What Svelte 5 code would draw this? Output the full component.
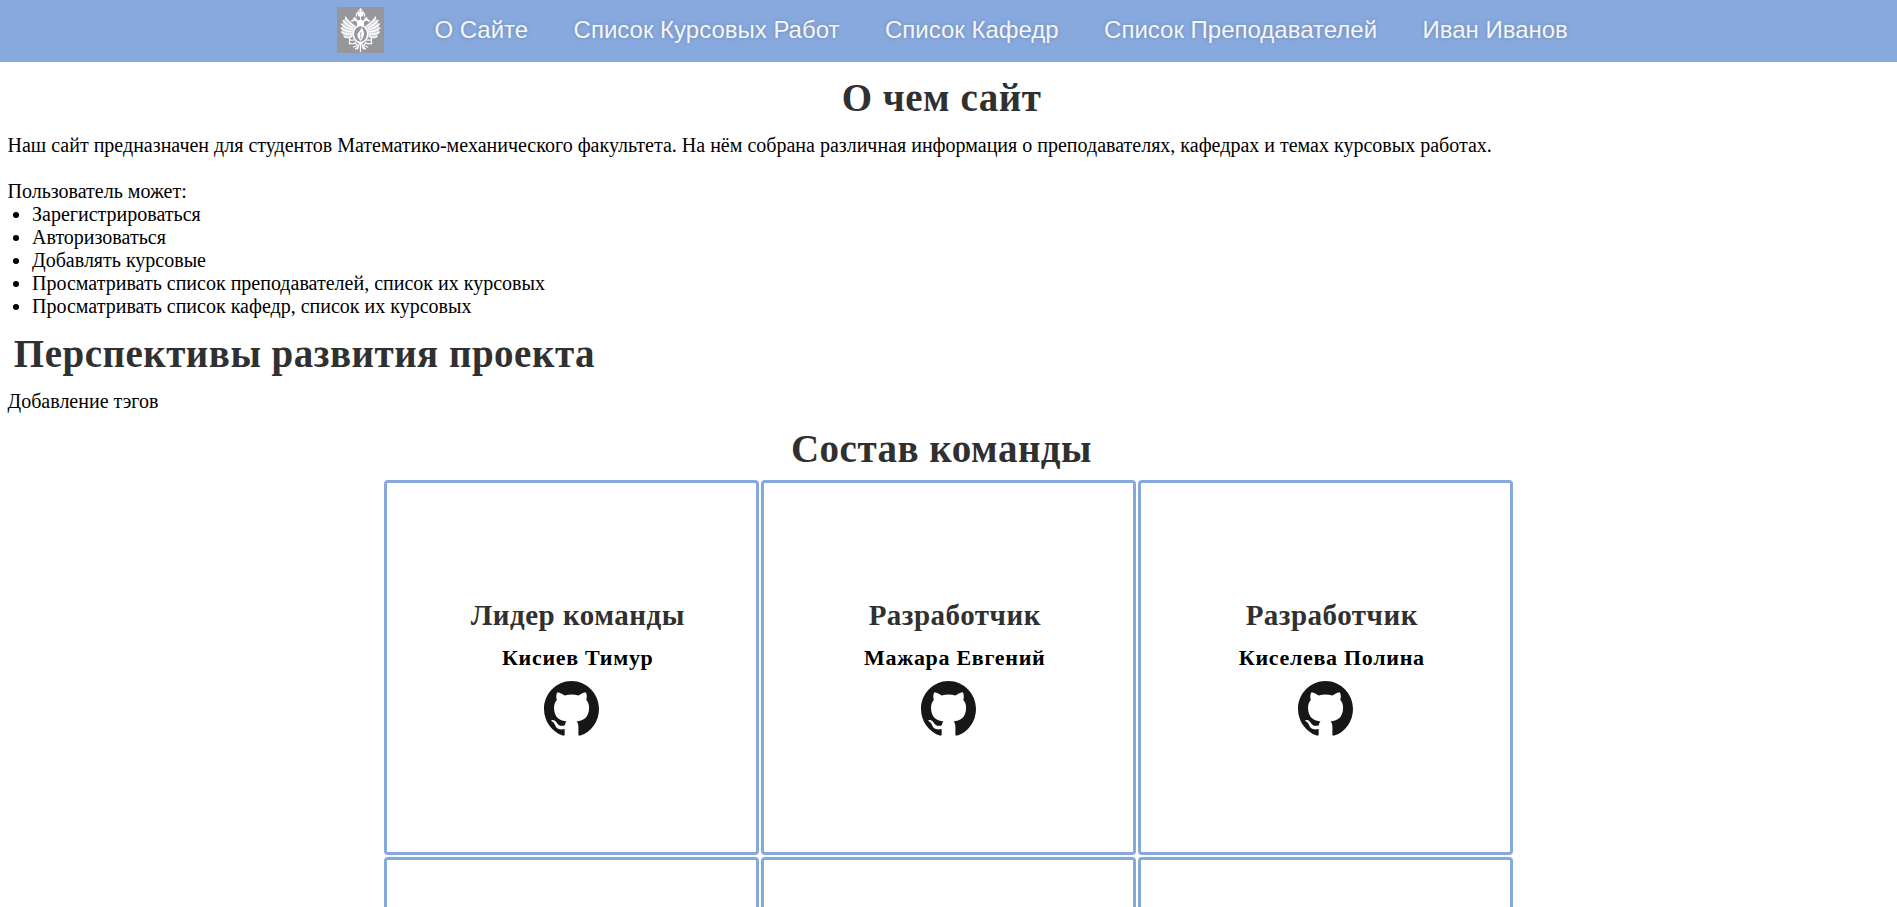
<script>
  const links = [
    'О Сайте',
    'Список Курсовых Работ',
    'Список Кафедр',
    'Список Преподавателей',
    'Иван Иванов'
  ];

  const abilities = [
    'Зарегистрироваться',
    'Авторизоваться',
    'Добавлять курсовые',
    'Просматривать список преподавателей, список их курсовых',
    'Просматривать список кафедр, список их курсовых'
  ];

  const team = [
    { role: 'Лидер команды', name: 'Кисиев Тимур' },
    { role: 'Разработчик', name: 'Мажара Евгений' },
    { role: 'Разработчик', name: 'Киселева Полина' },
    null,
    null,
    null
  ];
</script>

{#snippet wing()}
  <path fill="#fff" fill-opacity=".6" stroke="none" d="M8.500 10 L16 17 L19.500 19 L16.500 23 L15 29 L8 31 L5 26 L5 18 Z" />
  <path d="M17 19 C13 16 9.500 13 8.500 10 M16 21 C11 18.500 8 16 6 13.500 M16 23 C10 21.500 6.500 19 4.500 17 M16 25 C9 24.500 6 23 4 21 M15.500 27 C10 27.500 7 27 4.500 25 M15 29 C12 31 9 31 7 29.500" />
  <path stroke-width="1.800" d="M21 19 C21.500 15 20 12.500 17 12.500 L15 14 M19 12.500 L17.500 11" />
  <path d="M15 29 L12.500 31 V36.500 H18 M12.500 33 H17 M18 35 L20 38" />
{/snippet}

<div class="page">
  <nav class="navbar">
    <svg class="logo" viewBox="0 0 47 46" aria-hidden="true">
      <rect width="47" height="46" fill="#95979b" />
      <g fill="none" stroke="#fff" stroke-width="1.25" stroke-linecap="round">
        {@render wing()}
        <g transform="translate(47 0) scale(-1 1)">{@render wing()}</g>
        <path d="M23.500 1.500 V13 M22 3 H25 M19.500 6.500 V9 M27.500 6.500 V9" />
        <path fill="#fff" stroke="none" d="M20 6 C20 3.800 22 4 23.500 5.500 C25 4 27 3.800 27 6 L25.500 9.500 H21.500 Z M21.500 13 H25.500 L26.500 19 H20.500 Z" />
        <ellipse cx="23.500" cy="27" rx="7.200" ry="8.500" stroke-width="1.500" />
        <path d="M22.500 36 L20.500 42 M23.500 36 V44.500 M24.500 36 L26.500 42 M21 38.500 L16.500 40 M26 38.500 L30.500 40 M18.500 42 L21 40 M28.500 42 L26 40" />
      </g>
      <path fill="#fff" d="M24.500 20 C26 23 28 26 26.500 29 C25.500 31.500 25 32.500 23.500 34 C23 32.500 20 31 20.500 27.500 C21 25 24 24 24.500 20Z" />
      <path fill="none" stroke="#95979b" stroke-width=".8" d="M24.500 25 C22 28 25 29 23.500 32" />
    </svg>
    <ul class="links">
      {#each links as link}
        <li><a href="#top">{link}</a></li>
      {/each}
    </ul>
  </nav>

  <main>
    <h1 class="centered">О чем сайт</h1>
    <div class="text">
      <p>
        Наш сайт предназначен для студентов Математико-механического факультета. На нём собрана
        различная информация о преподавателях, кафедрах и темах курсовых работах.
      </p>
      <br />
      <p>Пользователь может:</p>
      <ul class="abilities">
        {#each abilities as ability}
          <li>{ability}</li>
        {/each}
      </ul>
    </div>
    <h1>Перспективы развития проекта</h1>
    <div class="text"><p>Добавление тэгов</p></div>
    <h1 class="centered last">Состав команды</h1>
    <section class="team">
      {#each team as member}
        <article class="card">
          {#if member}
            <h2>{member.role}</h2>
            <h3>{member.name}</h3>
            <svg class="github" viewBox="0 0 16 15.7" preserveAspectRatio="none" aria-hidden="true">
              <path d="M8 0C3.58 0 0 3.58 0 8c0 3.54 2.29 6.53 5.47 7.59.4.07.55-.17.55-.38 0-.19-.01-.82-.01-1.49-2.01.37-2.53-.49-2.69-.94-.09-.23-.48-.94-.82-1.13-.28-.15-.68-.52-.01-.53.63-.01 1.08.58 1.23.82.72 1.21 1.87.87 2.33.66.07-.52.28-.87.51-1.07-1.78-.2-3.64-.89-3.64-3.95 0-.87.31-1.59.82-2.15-.08-.2-.36-1.02.08-2.12 0 0 .67-.21 2.2.82.64-.18 1.32-.27 2-.27.68 0 1.36.09 2 .27 1.53-1.04 2.2-.82 2.2-.82.44 1.1.16 1.92.08 2.12.51.56.82 1.27.82 2.15 0 3.07-1.87 3.75-3.65 3.95.29.25.54.73.54 1.48 0 1.07-.01 1.93-.01 2.2 0 .21.15.46.55.38A8.013 8.013 0 0016 8c0-4.42-3.58-8-8-8z" />
            </svg>
          {/if}
        </article>
      {/each}
    </section>
  </main>
</div>

<style>
  :global(body) {
    margin: 0;
    background: #fff;
  }

  .page {
    height: 100vh;
    overflow: hidden;
    color: #000;
    font-family: 'Liberation Serif', 'Times New Roman', serif;
  }

  .navbar {
    display: flex;
    align-items: center;
    gap: 50.4px;
    box-sizing: border-box;
    height: 62px;
    padding: 0 0 2px 337px;
    background: #87a9de;
  }

  .logo {
    flex: none;
    width: 47px;
    height: 46px;
  }

  .links {
    display: flex;
    gap: 45.4px;
    margin: 0;
    padding: 0;
    list-style: none;
  }

  .links a {
    display: block;
    color: #f5f5f5;
    font: 24px/28px 'Liberation Sans', Arial, sans-serif;
    text-decoration: none;
    text-shadow: 0 0 4px rgba(0, 0, 0, 0.2);
    white-space: nowrap;
  }

  h1,
  h2,
  h3,
  p {
    margin: 0;
  }

  h1 {
    box-sizing: border-box;
    height: 72px;
    padding: 14px 0 0 13.8px;
    color: #303030;
    font-size: 39px;
    line-height: 44px;
    letter-spacing: 0.5px;
  }

  h1.centered {
    padding: 14px 14px 0 0;
    text-align: center;
  }

  h1.last {
    height: 67px;
  }

  .text {
    padding-left: 7.5px;
    font-size: 20px;
    line-height: 23px;
  }

  .abilities {
    margin: 0;
    padding-left: 24.5px;
  }

  .team {
    display: grid;
    grid-template-columns: repeat(3, 375px);
    grid-auto-rows: 375px;
    gap: 2px;
    justify-content: center;
  }

  .card {
    display: flex;
    flex-direction: column;
    align-items: center;
    box-sizing: border-box;
    padding-top: 115px;
    border: 3px solid #87a9de;
    border-radius: 4px;
  }

  h2 {
    padding-left: 12.5px;
    color: #303030;
    font-size: 29px;
    line-height: 34px;
    letter-spacing: 0.5px;
  }

  h3 {
    margin: 13px 0 9.5px;
    padding-left: 12.5px;
    font-size: 22px;
    line-height: 26px;
    letter-spacing: 0.7px;
  }

  .github {
    width: 55px;
    height: 55px;
    fill: #181617;
  }
</style>
